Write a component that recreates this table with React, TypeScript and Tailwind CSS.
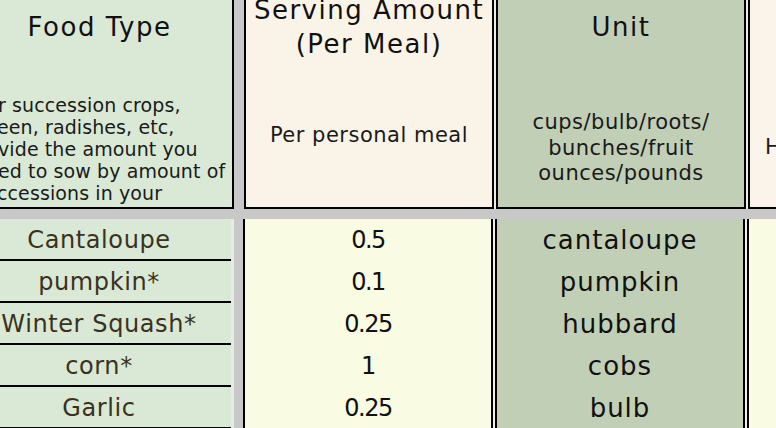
import React from "react";

const font = { fontFamily: '"DejaVu Sans", "Liberation Sans", sans-serif' };

const foods = ["Cantaloupe", "pumpkin*", "Winter Squash*", "corn*", "Garlic", "Onion"];
const amounts = ["0.5", "0.1", "0.25", "1", "0.25", "1"];
const units = ["cantaloupe", "pumpkin", "hubbard", "cobs", "bulb", "bulb"];

export default function App() {
  return (
    <div className="w-[776px] h-[428px] overflow-hidden bg-[#c8c8c8]" style={font}>
      <div className="ml-[-33px] flex flex-col w-max">
        {/* Header row */}
        <div className="flex h-[209px] overflow-hidden">
          {/* Food Type */}
          <div className="w-[267px] h-[209px] bg-[#d9e9d5] border-r-2 border-b-2 border-black flex flex-col overflow-hidden">
            <div className="shrink-0 mt-[-7px] h-[68px] flex items-center justify-center text-[26px] leading-[34px] tracking-[1.5px] text-[#111] whitespace-nowrap">
              Food Type
            </div>
            <div className="shrink-0 mt-[33px] pl-[32px] text-[19px] leading-[22px] tracking-[0.1px] text-[#1a1a1a] whitespace-nowrap">
              <div className="ml-[-1px]">r succession crops,</div>
              <div className="ml-[-2px]">een, radishes, etc,</div>
              <div className="ml-[-1px]">vide the amount you</div>
              <div className="ml-[-1px]">ed to sow by amount of</div>
              <div className="ml-[-2px]">ccessions in your</div>
              <div className="ml-[-2px]">rden plan.</div>
            </div>
          </div>
          <div className="w-[10px] bg-[#c8c8c8]" />
          {/* Serving */}
          <div className="w-[250px] h-[209px] bg-[#faf4e8] border-x-2 border-b-2 border-black flex flex-col overflow-hidden">
            <div className="shrink-0 mt-[-7px] h-[68px] flex flex-col items-center justify-center text-[26px] leading-[34px] tracking-[1.5px] text-[#111] whitespace-nowrap">
              <span>Serving Amount</span>
              <span>(Per Meal)</span>
            </div>
            <div className="shrink-0 mt-[61px] text-center text-[21px] leading-[26px] tracking-[0.5px] text-[#1a1a1a] whitespace-nowrap">
              Per personal meal
            </div>
          </div>
          <div className="w-[2px] bg-[#ecece6]" />
          {/* Unit */}
          <div className="w-[250px] h-[209px] bg-[#c2cfb7] border-x-2 border-b-2 border-black flex flex-col overflow-hidden">
            <div className="shrink-0 mt-[-7px] h-[68px] flex items-center justify-center text-[26px] leading-[34px] tracking-[1.5px] text-[#111] whitespace-nowrap">
              Unit
            </div>
            <div className="shrink-0 mt-[49px] flex flex-col items-center text-[21px] leading-[25.5px] tracking-[0.5px] text-[#1a1a1a] whitespace-nowrap">
              <span>cups/bulb/roots/</span>
              <span>bunches/fruit</span>
              <span>ounces/pounds</span>
            </div>
          </div>
          <div className="w-[2px] bg-[#ecece6]" />
          {/* Next column */}
          <div className="w-[250px] h-[209px] bg-[#fbf4ea] border-l-2 border-b-2 border-black flex flex-col overflow-hidden">
            <div className="shrink-0 mt-[-7px] h-[68px]" />
            <div className="shrink-0 mt-[74px] pl-[15px] text-[21px] leading-[25.5px] tracking-[0.5px] text-[#1a1a1a] whitespace-nowrap">
              How many meals
            </div>
          </div>
        </div>

        {/* Gray strip */}
        <div className="h-[10px] bg-[#c8c8c8]" />

        {/* Body row */}
        <div className="flex">
          <div className="w-[267px] bg-[#d9e9d5] border-r-[3px] border-[#e4ede1] flex flex-col">
            {foods.map((f, i) => (
              <div
                key={i}
                className="h-[42px] border-b-2 border-black flex items-center justify-center pt-[2px] text-[24px] tracking-[0.6px] text-[#3b3120] whitespace-nowrap"
              >
                {f}
              </div>
            ))}
          </div>
          <div className="w-[9px] bg-[#c8c8c8]" />
          <div className="w-[250px] bg-[#f9fbe3] border-x-2 border-black flex flex-col">
            {amounts.map((a, i) => (
              <div
                key={i}
                className="h-[42px] flex items-center justify-center text-[24px] tracking-[-1.5px] text-[#111]"
              >
                {a}
              </div>
            ))}
          </div>
          <div className="w-[2px] bg-[#ecece6]" />
          <div className="w-[250px] bg-[#c2cfb7] border-x-2 border-black flex flex-col">
            {units.map((u, i) => (
              <div
                key={i}
                className="h-[42px] flex items-center justify-center text-[26px] tracking-[1px] text-[#111]"
              >
                {u}
              </div>
            ))}
          </div>
          <div className="w-[2px] bg-[#ecece6]" />
          <div className="w-[250px] bg-[#f9fbe3] border-l-2 border-black h-[252px]" />
        </div>
      </div>
    </div>
  );
}
